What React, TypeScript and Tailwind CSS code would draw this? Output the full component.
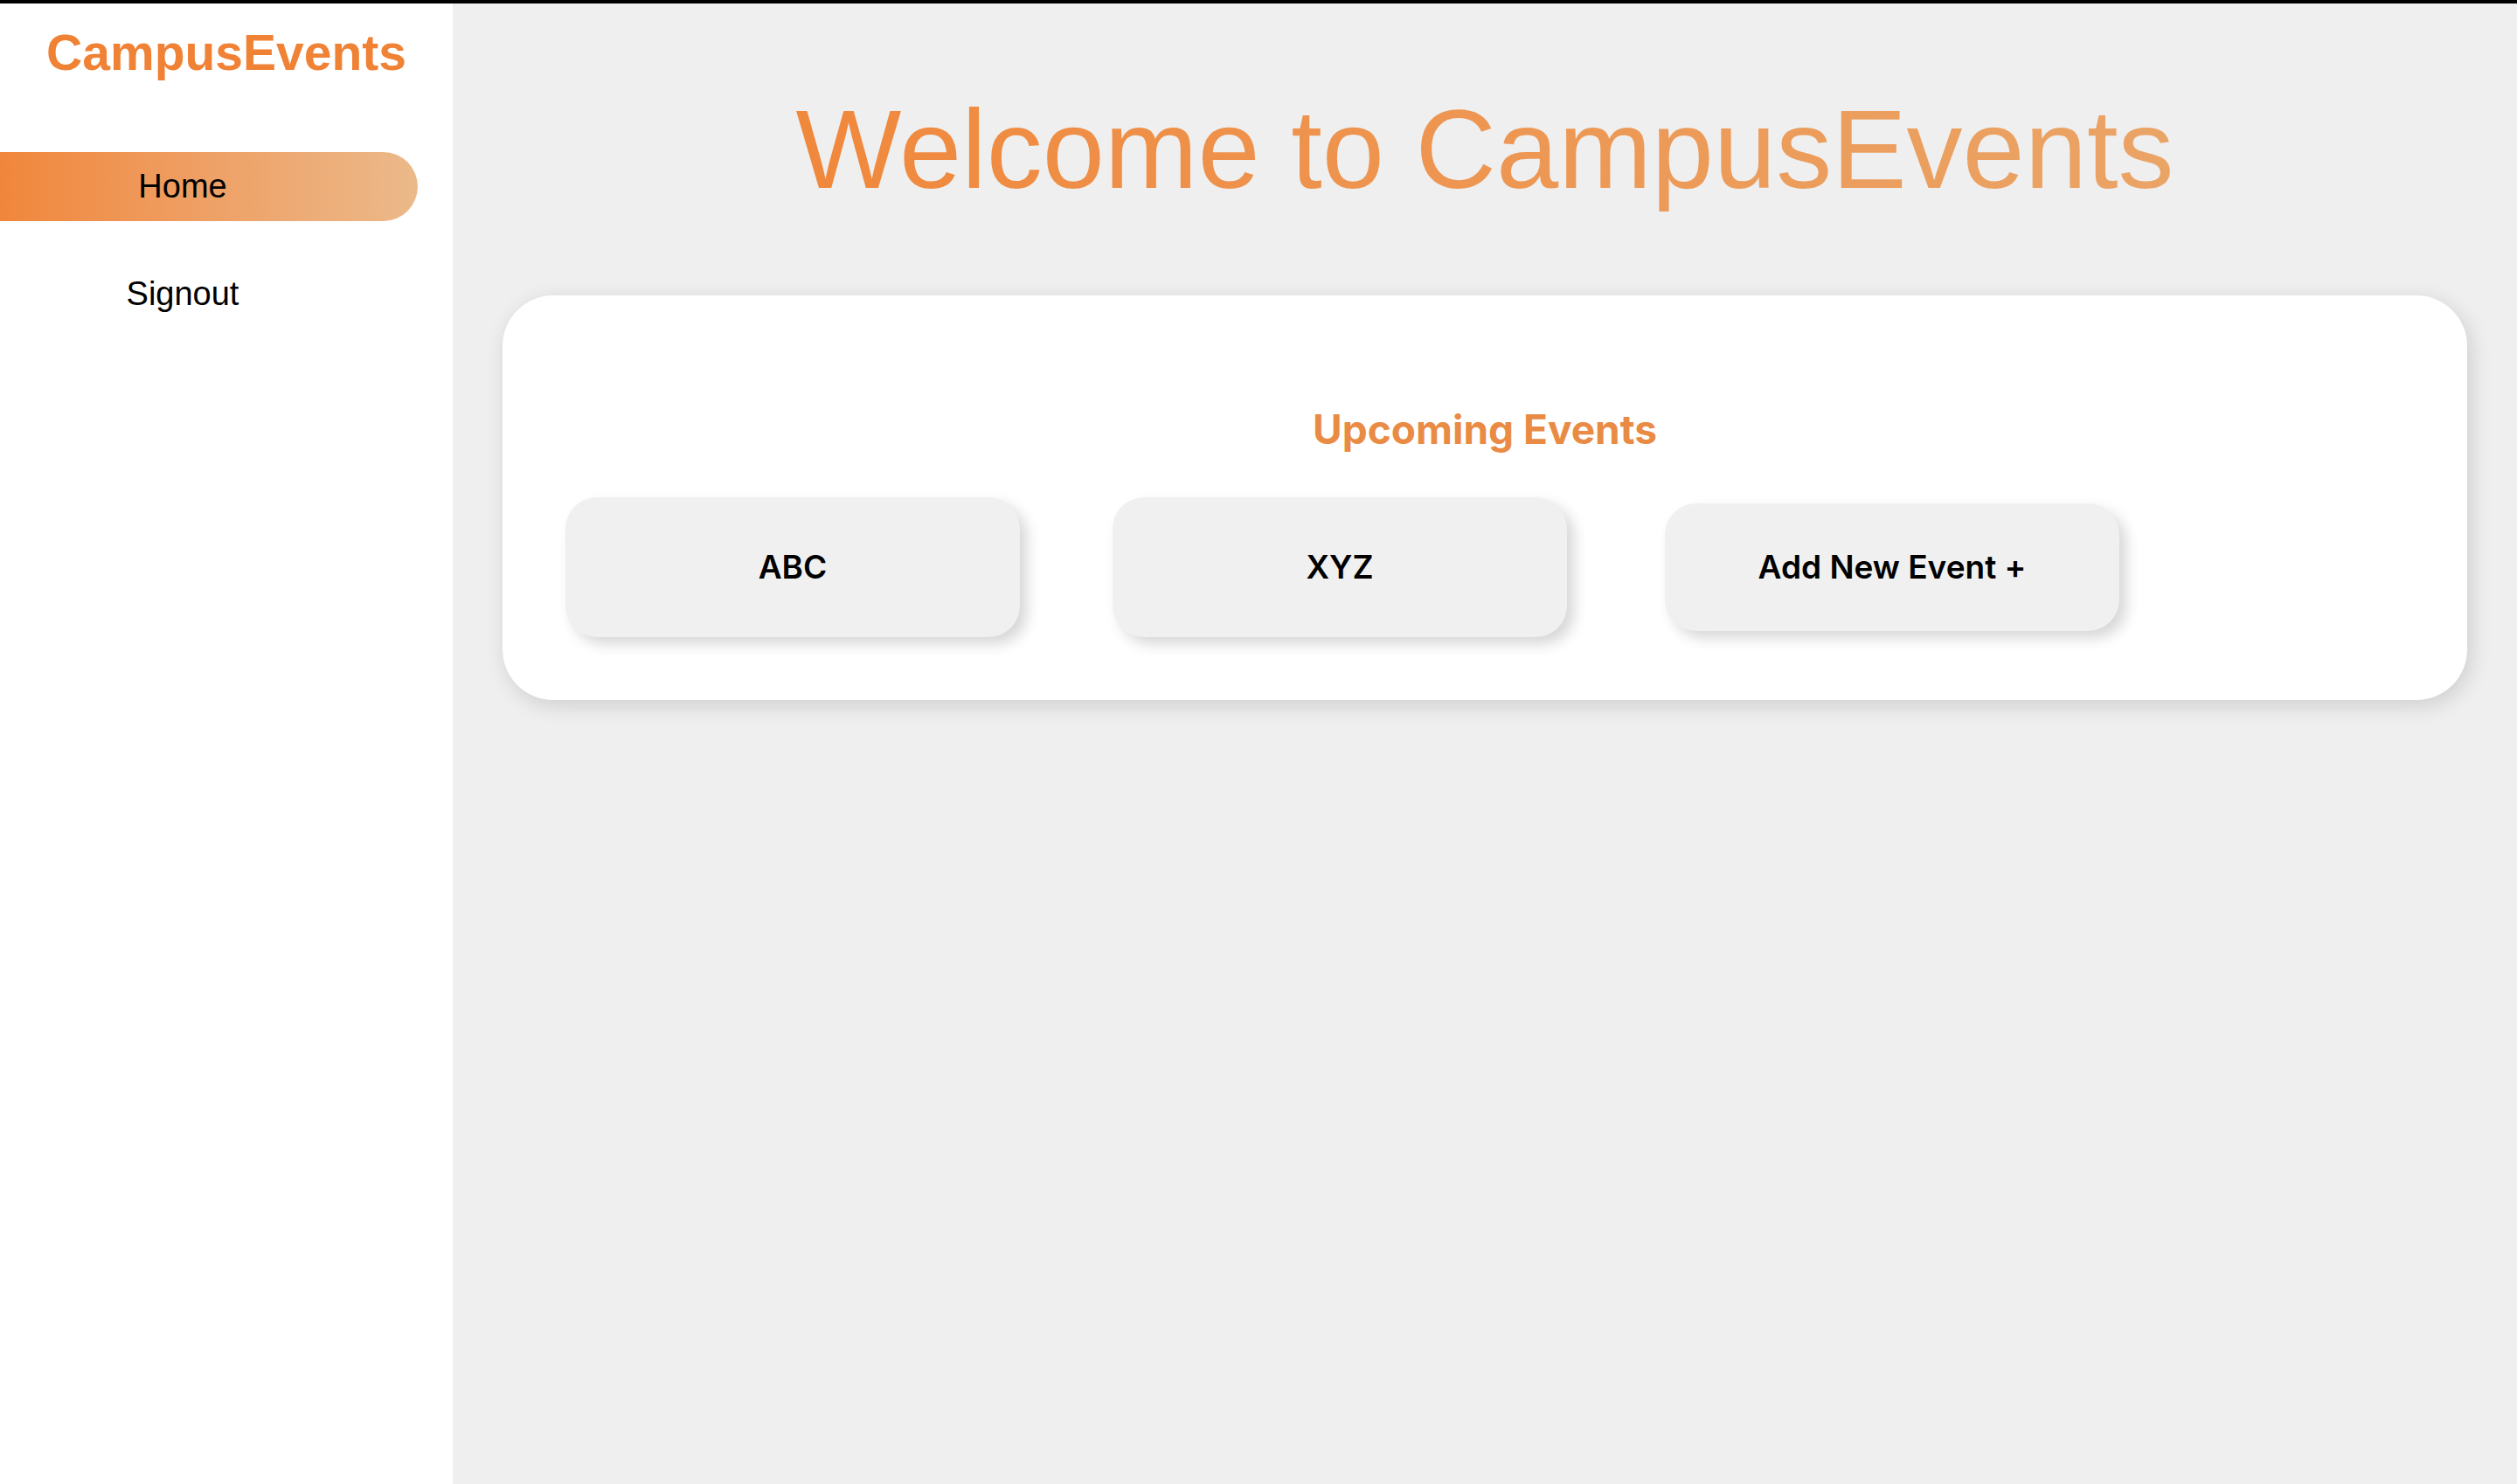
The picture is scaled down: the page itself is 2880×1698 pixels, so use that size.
import React from 'react';

const events = ['ABC', 'XYZ'];

const NavItem = ({ label, active }: { label: string; active?: boolean }) => (
  <div
    className={
      'flex h-[79px] w-[478px] items-center justify-center pr-[60px] text-[38px] text-black ' +
      (active ? 'rounded-r-full bg-gradient-to-r from-[#f0863a] to-[#ebb98a]' : '')
    }
  >
    {label}
  </div>
);

const EventCard = ({ label, tall = true, className }: { label: string; tall?: boolean; className?: string }) => (
  <div
    className={
      'flex w-[520px] items-center justify-center rounded-[36px] bg-[#f0f0f0] text-[37px] font-semibold text-black shadow-[8px_8px_16px_rgba(0,0,0,0.16)] ' +
      (tall ? 'h-[160px] ' : 'h-[146px] ') +
      (className ?? '')
    }
    style={{ fontFamily: 'Inter, sans-serif' }}
  >
    {label}
  </div>
);

export default function App() {
  return (
    <div
      className="flex min-h-[1698px] border-t-4 border-black"
      style={{ fontFamily: '"Liberation Sans", Arial, sans-serif' }}
    >
      <aside className="w-[518px] shrink-0 bg-white">
        <div className="mt-[28px] text-center text-[57px] font-bold leading-[57px] text-[#f08236]">
          CampusEvents
        </div>
        <nav className="mt-[85px] flex flex-col gap-[44px]">
          <NavItem label="Home" active />
          <NavItem label="Signout" />
        </nav>
      </aside>

      <main className="flex-1 bg-[#efefef] px-[57px]">
        <h1 className="mt-[103px] text-center text-[128px] leading-[128px]">
          <span className="bg-gradient-to-r from-[#f0883c] to-[#eaa466] bg-clip-text text-transparent">
            Welcome to CampusEvents
          </span>
        </h1>

        <section className="mt-[103px] rounded-[58px] bg-white px-[72px] pb-[72px] pt-[130px] shadow-[4px_6px_24px_rgba(0,0,0,0.14)]">
          <h2
            className="text-center text-[46px] font-bold leading-[46px] text-[#e98b44]"
            style={{ fontFamily: 'Inter, sans-serif' }}
          >
            Upcoming Events
          </h2>
          <div className="mt-[55px] flex items-center">
            <EventCard label={events[0]} className="mr-[106px]" />
            <EventCard label={events[1]} className="mr-[112px]" />
            <EventCard label="Add New Event +" tall={false} />
          </div>
        </section>
      </main>
    </div>
  );
}
